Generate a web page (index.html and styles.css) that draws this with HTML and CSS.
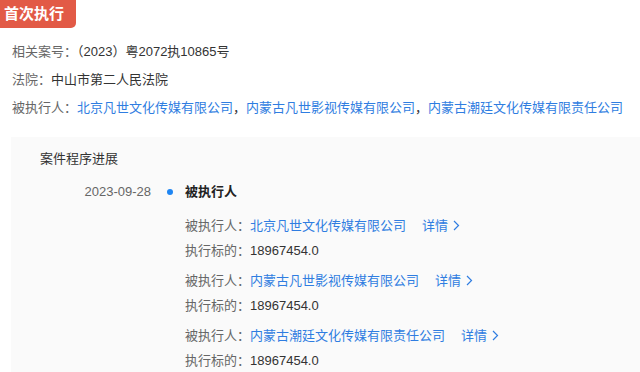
FILE: index.html
```html
<!DOCTYPE html>
<html lang="zh">
<head>
<meta charset="utf-8">
<link rel="stylesheet" href="styles.css">
</head>
<body>
<div class="page">
  <div class="badge">首次执行</div>
  <div class="info">
    <div class="line"><span class="label">相关案号：</span><span class="val">（2023）粤2072执10865号</span></div>
    <div class="line"><span class="label">法院：</span><span class="val">中山市第二人民法院</span></div>
    <div class="line"><span class="label">被执行人：</span><span class="link">北京凡世文化传媒有限公司</span><span class="val">，</span><span class="link">内蒙古凡世影视传媒有限公司</span><span class="val">，</span><span class="link">内蒙古潮廷文化传媒有限责任公司</span></div>
  </div>
  <div class="panel">
    <div class="panel-title">案件程序进展</div>
    <div class="timeline">
      <div class="date">2023-09-28</div>
      <div class="dot-col"><span class="dot"></span></div>
      <div class="content">
        <div class="event">被执行人</div>
        <div class="group first">
          <div class="row"><span class="label">被执行人：</span><span class="link">北京凡世文化传媒有限公司</span><span class="more">详情<svg class="chev" width="7" height="11" viewBox="0 0 7 11"><path d="M1 1l4.5 4.5L1 10" fill="none" stroke="currentColor" stroke-width="1.2"/></svg></span></div>
          <div class="row"><span class="label">执行标的：</span><span class="val">18967454.0</span></div>
        </div>
        <div class="group">
          <div class="row"><span class="label">被执行人：</span><span class="link">内蒙古凡世影视传媒有限公司</span><span class="more">详情<svg class="chev" width="7" height="11" viewBox="0 0 7 11"><path d="M1 1l4.5 4.5L1 10" fill="none" stroke="currentColor" stroke-width="1.2"/></svg></span></div>
          <div class="row"><span class="label">执行标的：</span><span class="val">18967454.0</span></div>
        </div>
        <div class="group">
          <div class="row"><span class="label">被执行人：</span><span class="link">内蒙古潮廷文化传媒有限责任公司</span><span class="more">详情<svg class="chev" width="7" height="11" viewBox="0 0 7 11"><path d="M1 1l4.5 4.5L1 10" fill="none" stroke="currentColor" stroke-width="1.2"/></svg></span></div>
          <div class="row"><span class="label">执行标的：</span><span class="val">18967454.0</span></div>
        </div>
      </div>
    </div>
  </div>
</div>
</body>
</html>
```
FILE: styles.css
```css
* { box-sizing: border-box; }
html, body { margin: 0; padding: 0; background: #fff; }
body {
  font-family: "Liberation Sans", "Noto Sans CJK SC", sans-serif;
  font-size: 13px;
  color: #333;
  width: 640px;
  height: 372px;
  overflow: hidden;
}
.page { display: flex; flex-direction: column; }
.badge {
  align-self: flex-start;
  width: 76px;
  height: 28px;
  line-height: 28px;
  padding-left: 4px;
  background: #e25a46;
  color: #fff;
  font-weight: bold;
  font-size: 15px;
  border-bottom-right-radius: 5px;
}
.info { padding: 10px 0 0 12px; }
.line { height: 28px; line-height: 28px; white-space: nowrap; }
.label { color: #666; }
.val { color: #333; }
.link { color: #2f7de1; }
.panel {
  margin: 15px 0 0 11px;
  background: #fafafa;
  padding: 11px 0 0 29px;
  height: 240px;
}
.panel-title { line-height: 22px; color: #333; }
.timeline { display: flex; margin-top: 11px; }
.date { width: 111px; text-align: right; color: #666; line-height: 22px; }
.dot-col { width: 34px; display: flex; justify-content: center; padding-top: 8px; padding-left: 3px; }
.dot { width: 6px; height: 6px; border-radius: 50%; background: #1f86f3; display: block; }
.content { display: flex; flex-direction: column; }
.event { line-height: 22px; font-weight: bold; color: #222; }
.group { margin-top: 5px; }
.group.first { margin-top: 10px; }
.row { line-height: 25px; white-space: nowrap; }
.more { color: #2f7de1; margin-left: 16px; display: inline-flex; align-items: center; gap: 5px; vertical-align: top; }
.chev { display: block; }
```
